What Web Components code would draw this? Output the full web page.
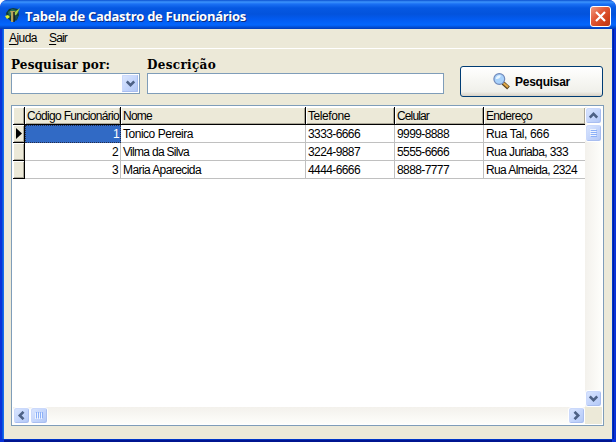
<!DOCTYPE html>
<html lang="pt-BR"><head><meta charset="utf-8"><title>Tabela de Cadastro de Funcionários</title>
<style>html,body{margin:0;width:616px;height:442px;overflow:hidden;background:#fff}</style></head>
<body><funcionarios-app></funcionarios-app>
<script>
const define=(name,html,ready)=>{
  const t=document.createElement('template');t.innerHTML=html;
  customElements.define(name,class extends HTMLElement{
    constructor(){super();this.attachShadow({mode:'open'}).append(t.content.cloneNode(true));}
    connectedCallback(){ready&&ready.call(this);}
  });
};

/* Text run whose tracking is adjusted to the width given in "w" */
define('fit-text',`<style>:host{display:inline-block;white-space:pre}span{display:inline-block}</style><span><slot></slot></span>`,function(){
  const s=this.shadowRoot.querySelector('span'),w=+this.getAttribute('w'),n=this.textContent.length;
  if(w&&n){s.style.letterSpacing=((w-s.getBoundingClientRect().width)/n)+'px';}
});

define('title-bar',`<style>
:host{display:flex;height:29px;box-sizing:border-box;padding:1px 5px 0 5px;align-items:center;border-radius:7px 7px 0 0;
background:linear-gradient(#0a50d0 0,#3c94fc 2px,#1a70f4 4px,#0558e2 8px,#0353dc 14px,#025cf2 20px,#0366fd 25px,#0250d8 27px,#003cb8 29px);
font:bold 13px "Open Sans","Liberation Sans",sans-serif;color:#fff;text-shadow:1px 1px 0 #0a2a80}
svg{flex:none}fit-text{margin-left:5px;flex:1;line-height:18px;margin-top:2px}
.x{width:21px;height:21px;box-sizing:border-box;border:1px solid #fff;border-radius:3px;background:linear-gradient(135deg,#f09a80,#e25a38 40%,#d04018 75%,#b83818);display:grid;place-items:center;margin-top:2px}
</style>
<svg width="15" height="17" viewBox="0 0 15 17"><path d="M1 6 4 2l4-1 5 1 1 6-2 5-5 2-5-4Z" fill="#103c38"/><path d="M3 5 7 2l4 1-1 4-6 2Z" fill="#276f55"/><path d="m9 6 2-2 4-3-3 6-2 2Z" fill="#a5ce44"/><path d="M5 4h5l-1 2v9H6V6Z" fill="#b7a55c"/><path d="M9 5v10" stroke="#181e24" stroke-width="1.5"/><path d="m0 9 3-1 2 2-3 2Z" fill="#dff22e"/><path d="m10 8 3 1-2 5Z" fill="#174c50"/></svg>
<fit-text w="221"><slot></slot></fit-text>
<div class="x"><svg width="13" height="13" viewBox="0 0 13 13"><path d="m2 2 9 9m0-9-9 9" stroke="#fff" stroke-width="2.2"/></svg></div>`,function(){
  const f=this.shadowRoot.querySelector('fit-text');f.textContent=this.textContent;f.connectedCallback();
});

define('menu-bar',`<style>:host{display:flex;height:20px;box-sizing:border-box;border-bottom:1px solid #fff;padding:2px 0 0 5px;gap:12px;font:12px/15px "Liberation Sans",sans-serif;color:#000}u{text-underline-offset:2px;text-decoration-thickness:1px}</style>
<fit-text w="28"><u>A</u>juda</fit-text><fit-text w="18"><u>S</u>air</fit-text>`);

define('xp-glyph',`<style>:host{display:grid;place-items:center;box-sizing:border-box;width:17px;height:17px;border:1px solid #fff;border-radius:3px;background:linear-gradient(135deg,#dce7fe,#c1d3fb 60%,#b2c7f4);box-shadow:inset -1px -1px #a9bef0,inset 1px 1px #cbd9fb}
svg{display:block}path{fill:none;stroke:#4d6185;stroke-width:2.6}
:host([dir=up]) svg{transform:rotate(180deg)}:host([dir=left]) svg{transform:rotate(90deg)}:host([dir=right]) svg{transform:rotate(-90deg)}
:host([dir=grip]) .a,:host([dir=gripv]) .a{display:none}.g{display:none}
:host([dir=grip]) .g,:host([dir=gripv]) .g{display:block;stroke:#eef4fe;stroke-width:1}
:host([dir=grip]) .d,:host([dir=gripv]) .d{stroke:#8cb0f8}:host([dir=grip]) svg{transform:rotate(-90deg)}
</style><svg width="9" height="9" viewBox="0 0 9 9"><path class="a" d="m.8 2.5 3.7 3.7 3.7-3.7"/><path class="g" d="M1 .5h6M1 2.5h6M1 4.5h6M1 6.5h6"/><path class="g d" d="M2 1.5h6M2 3.5h6M2 5.5h6M2 7.5h6"/></svg>`);

define('combo-box',`<style>:host{display:flex;justify-content:flex-end;box-sizing:border-box;width:129px;height:21px;padding:1px;border:1px solid #7f9db9;background:#fff}xp-glyph{width:16px;height:17px;border:0;border-radius:1px}</style><xp-glyph></xp-glyph>`);
define('text-field',`<style>:host{display:block;box-sizing:border-box;width:297px;height:21px;border:1px solid #7f9db9;background:#fff}</style>`);
define('field-group',`<style>:host{display:flex;flex-direction:column;font:bold 12px/18px "DejaVu Serif",serif;color:#000}.l{height:17px;display:flex}</style><div class="l"><slot name="label"></slot></div><slot></slot>`);

define('search-button',`<style>:host{display:flex;align-items:center;box-sizing:border-box;width:143px;height:31px;border:1px solid #003c74;border-radius:3px;padding-left:32px;gap:5px;background:linear-gradient(#fff,#f6f6f2 50%,#f0f0ea 85%,#d8d2c6);font:bold 12px/15px "Liberation Sans",sans-serif;color:#000}svg{flex:none}fit-text{padding-top:2px}</style>
<svg width="17" height="17" viewBox="0 0 17 17"><path d="m10 10 5.5 5" stroke="#59431d" stroke-width="4"/><path d="m10.3 10 4.8 4.2" stroke="#e0a848" stroke-width="2.2"/><circle cx="6.3" cy="6" r="5.4" fill="#a9d2fb" stroke="#7189b9" stroke-width="1.2"/><path d="M2.8 6a3.6 3.6 0 0 1 5-3.4C7.4 5 5.5 6.5 2.8 6Z" fill="#e9f6ff"/></svg><fit-text w="55">Pesquisar</fit-text>`);

define('data-grid',`<style>
:host{display:grid;box-sizing:border-box;width:593px;height:321px;border:1px solid #7f9db9;padding:1px;background:#fff;grid-template:300px 17px/572px 17px;font:12px/18px "Liberation Sans",sans-serif;color:#000}
.t{overflow:hidden}
.r{display:grid;grid-template-columns:12px 96px 185px 89px 89px 101px;height:18px}
.r>div{box-sizing:border-box;height:18px;border-right:1px solid #c0c0c0;border-bottom:1px solid #c0c0c0;padding-left:2px;overflow:hidden}
.r>div:last-child{border-right:0}
.r>div:first-child,.h>div{background:#ece9d8;border-right:1px solid #000!important;border-bottom:1px solid #000!important;box-shadow:inset 1px 1px #fff,inset -1px -1px #aca899}
.h>div:last-child{border-right:0!important}
.r>.n{text-align:right;padding-right:2px}
.r>.s{background:#316ac5;color:#fff;border:1px dotted #242c48;padding-right:2px;line-height:16px}
.r>.p{padding:3px 0 0 2px}.p svg{display:block}
.v{display:flex;flex-direction:column;background:linear-gradient(90deg,#f3f1ec,#fefefb)}
.b{display:flex;background:linear-gradient(#f3f1ec,#fefefb)}
.e{flex:1}.c{background:#ece9d8}.v .k{height:18px}.b .k{width:18px}
</style><div class="t"></div><div class="v"><xp-glyph dir="up"></xp-glyph><xp-glyph class="k" dir="gripv"></xp-glyph><span class="e"></span><xp-glyph dir="down"></xp-glyph></div>
<div class="b"><xp-glyph dir="left"></xp-glyph><xp-glyph class="k" dir="grip"></xp-glyph><span class="e"></span><xp-glyph dir="right"></xp-glyph></div><div class="c"></div>`,function(){
  const rows=[
    [['Código Funcionário',92],['Nome',29],['Telefone',42],['Celular',32],['Endereço',46]],
    [['1',5],['Tonico Pereira',70],['3333-6666',52],['9999-8888',52],['Rua Tal, 666',63]],
    [['2',6],['Vilma da Silva',66],['3224-9887',52],['5555-6666',52],['Rua Juriaba, 333',82]],
    [['3',6],['Maria Aparecida',78],['4444-6666',52],['8888-7777',52],['Rua Almeida, 2324',91]]];
  this.shadowRoot.querySelector('.t').innerHTML=rows.map((r,i)=>`<div class="r${i?'':' h'}"><div class="p">${i==1?'<svg width="7" height="11"><path d="M1 0v11l6-5.5Z"/></svg>':''}</div>${r.map(([t,w],j)=>`<div class="${i&&!j?'n'+(i==1?' s':''):''}"><fit-text w="${w}">${t}</fit-text></div>`).join('')}</div>`).join('');
});

define('funcionarios-app',`<style>
:host{display:block;width:616px;height:442px}
.w{box-sizing:border-box;width:616px;height:442px;display:flex;flex-direction:column;background:#0831d9;border-radius:7px 7px 0 0;overflow:hidden}
.m{box-sizing:border-box;flex:1;margin:0 4px 3px;background:#ece9d8;box-shadow:-1px 0 #166aee,-2px 0 #0855dd,1px 0 #0036c8,2px 0 #001ea0,0 1px #0036c8,0 3px #001590}
.f{display:flex;height:56px;box-sizing:border-box;padding:7px 0 0 7px;gap:7px}
search-button{margin:10px 0 0 9px}data-grid{margin-left:7px}
</style><div class="w"><title-bar>Tabela de Cadastro de Funcionários</title-bar><div class="m"><menu-bar></menu-bar>
<div class="f"><field-group><fit-text slot="label" w="99">Pesquisar por:</fit-text><combo-box></combo-box></field-group>
<field-group><fit-text slot="label" w="69">Descrição</fit-text><text-field></text-field></field-group><search-button></search-button></div>
<data-grid></data-grid></div></div>`);
</script></body></html>
